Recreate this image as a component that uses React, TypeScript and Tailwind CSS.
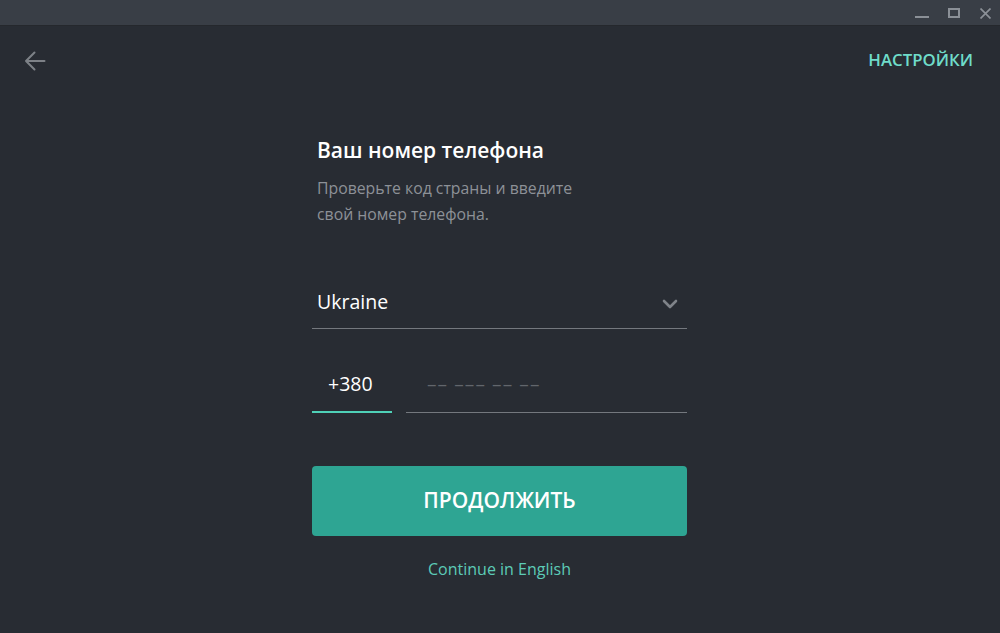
export default function App() {
  return (
    <div
      className="w-[1000px] h-[633px] bg-[#282c33] flex flex-col overflow-hidden"
      style={{ fontFamily: '"Open Sans", "Noto Sans", sans-serif' }}
    >
      {/* Window title bar */}
      <div className="h-[26px] bg-[#393e46] border-b border-[#25282d] flex justify-end items-center shrink-0">
        <div className="w-[32px] h-[25px] flex items-center justify-center">
          <div className="w-[14px] h-[2px] bg-[#8b9097] mt-[8px]" />
        </div>
        <div className="w-[32px] h-[25px] flex items-center justify-center">
          <div className="w-[12px] h-[10px] border-[2px] border-[#8b9097] mt-[1px]" />
        </div>
        <div className="w-[30px] h-[25px] flex items-center justify-center">
          <svg width="11" height="11" viewBox="0 0 11 11" stroke="#8b9097" strokeWidth="1.7" className="mt-[1px]">
            <path d="M0.5 0.5L10.5 10.5M10.5 0.5L0.5 10.5" />
          </svg>
        </div>
      </div>

      {/* Top bar */}
      <div className="h-[70px] flex items-center justify-between pl-[24px] pr-[27px] shrink-0">
        <svg width="22" height="20" viewBox="0 0 22 20" fill="none" stroke="#7d8187" strokeWidth="2" strokeLinecap="round" strokeLinejoin="round">
          <path d="M20.5 10H2M10.5 1.5L2 10L10.5 18.5" />
        </svg>
        <span className="text-[16.8px] font-semibold text-[#6fdcca] leading-[24px] mt-[-2px]">НАСТРОЙКИ</span>
      </div>

      {/* Form */}
      <div className="w-[375px] ml-[312px] mt-[40px] flex flex-col">
        <h1 className="pl-[5px] text-[21px] font-semibold text-white leading-[28px]">Ваш номер телефона</h1>
        <p className="pl-[5px] mt-[11px] text-[15.8px] text-[#8d9197] leading-[26px]">
          Проверьте код страны и введите
          <br />
          свой номер телефона.
        </p>

        <div className="mt-[61px] flex items-center justify-between border-b border-[#74787e] pb-[12px] pl-[5px] pr-[9px]">
          <span className="text-[19.5px] text-white leading-[28px]">Ukraine</span>
          <svg width="16" height="10" viewBox="0 0 16 10" fill="none" stroke="#7f8389" strokeWidth="2.6" strokeLinecap="round" strokeLinejoin="round" className="mt-[3px]">
            <path d="M2 2L8 8L14 2" />
          </svg>
        </div>

        <div className="mt-[41px] flex gap-[14px] items-end">
          <div className="w-[80px] border-b-2 border-[#4fd1b8] pb-[13px] pl-[16px]">
            <span className="block text-[19.5px] text-white leading-[28px]">+380</span>
          </div>
          <div className="flex-1 border-b border-[#74787e] pb-[14px] pl-[21px]">
            <span className="block text-[19px] text-[#62666c] leading-[28px] tracking-[1.1px]">–– ––– –– ––</span>
          </div>
        </div>

        <button className="mt-[53px] h-[70px] rounded-[4px] bg-[#2ea593] text-white text-[21px] font-semibold">
          ПРОДОЛЖИТЬ
        </button>

        <div className="mt-[21px] text-center text-[16px] leading-[24px] text-[#5ccbb7]">Continue in English</div>
      </div>
    </div>
  )
}
